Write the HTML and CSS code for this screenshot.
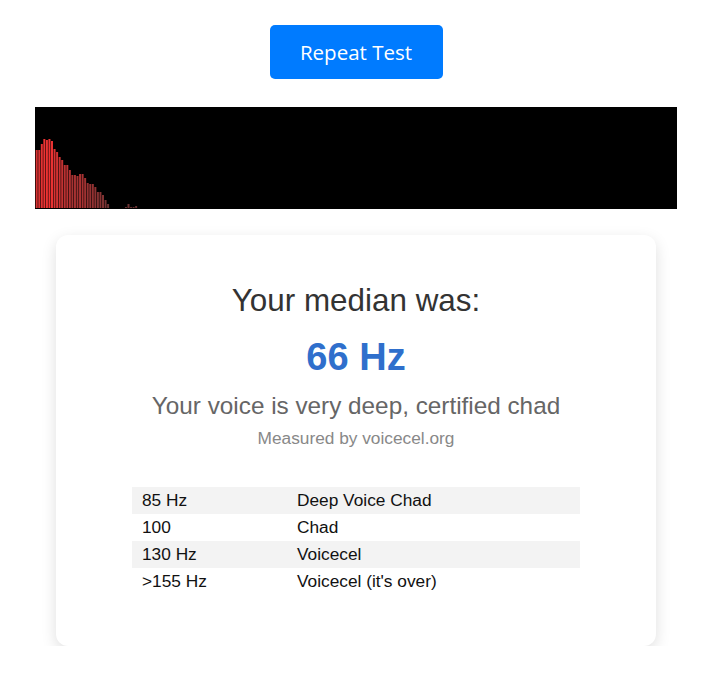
FILE: index.html
```html
<!DOCTYPE html>
<html>
<head>
<meta charset="utf-8">
<link rel="stylesheet" href="styles.css">
</head>
<body>
<div class="page">
  <div class="actions">
    <button class="btn">Repeat Test</button>
  </div>
  <div class="viz">
    <svg class="viz-svg" width="642" height="102" viewBox="0 0 642 102">
      <rect x="0" y="0" width="642" height="102" fill="#000"/>
      <g id="bars"></g>
    </svg>
  </div>
  <div class="card">
    <h2 class="label">Your median was:</h2>
    <div class="value">66 Hz</div>
    <p class="verdict">Your voice is very deep, certified chad</p>
    <p class="credit">Measured by voicecel.org</p>
    <table class="ranges">
      <tr><td class="c1">85 Hz</td><td>Deep Voice Chad</td></tr>
      <tr><td class="c1">100</td><td>Chad</td></tr>
      <tr><td class="c1">130 Hz</td><td>Voicecel</td></tr>
      <tr><td class="c1">&gt;155 Hz</td><td>Voicecel (it's over)</td></tr>
    </table>
  </div>
</div>
<script>
  var h = [58,58,64,69,68,69,67,59,56,51,48,43,43,38,33,33,32,34,34,30,25,24,24,21,16,16,13,8,4,0,0,0,0,0,0,1,4,1,1,2];
  var g = document.getElementById('bars');
  var ns = 'http://www.w3.org/2000/svg';
  for (var i = 0; i < h.length; i++) {
    if (!h[i]) continue;
    var r = document.createElementNS(ns, 'rect');
    r.setAttribute('x', (0.7 + i * 2.55).toFixed(2));
    r.setAttribute('y', 101 - h[i]);
    r.setAttribute('width', 2);
    r.setAttribute('height', h[i]);
    r.setAttribute('fill', 'rgb(' + (2 * h[i] + 100) + ',50,50)');
    g.appendChild(r);
  }
</script>
</body>
</html>
```

FILE: styles.css
```css
html, body {
  margin: 0;
  padding: 0;
  background: #fff;
}

.page {
  width: 712px;
  display: flex;
  flex-direction: column;
  align-items: center;
  padding-top: 25px;
  font-family: "Liberation Sans", Arial, sans-serif;
}

.actions {
  display: flex;
  justify-content: center;
}

.btn {
  width: 173px;
  height: 54px;
  border: none;
  border-radius: 5px;
  background: #007bff;
  color: #fff;
  font-family: "Open Sans", "Inter", sans-serif;
  font-size: 20.5px;
  cursor: pointer;
}

.viz {
  margin-top: 28px;
  line-height: 0;
}

.viz-svg {
  display: block;
}

.card {
  margin-top: 26px;
  width: 600px;
  box-sizing: border-box;
  height: 411px;
  border-radius: 12px;
  background: #fff;
  box-shadow: 0 5px 15px rgba(0, 0, 0, 0.13);
  display: flex;
  flex-direction: column;
  align-items: center;
  padding-top: 48px;
}

.label {
  margin: 0;
  font-size: 31.4px;
  font-weight: normal;
  color: #333;
  line-height: 36px;
}

.value {
  margin-top: 14px;
  font-size: 38px;
  font-weight: bold;
  color: #2f6fcc;
  line-height: 48px;
}

.verdict {
  margin: 11px 0 0;
  font-size: 24.3px;
  color: #666;
  line-height: 28px;
}

.credit {
  margin: 7px 0 0;
  font-size: 17.3px;
  color: #888;
  line-height: 22px;
}

.ranges {
  margin-top: 38px;
  width: 448px;
  border-collapse: collapse;
  font-size: 17.3px;
  color: #111;
}

.ranges td {
  height: 27px;
  padding: 0 10px;
}

.ranges .c1 {
  width: 135px;
}

.ranges tr:nth-child(odd) {
  background: #f3f3f3;
}
```
